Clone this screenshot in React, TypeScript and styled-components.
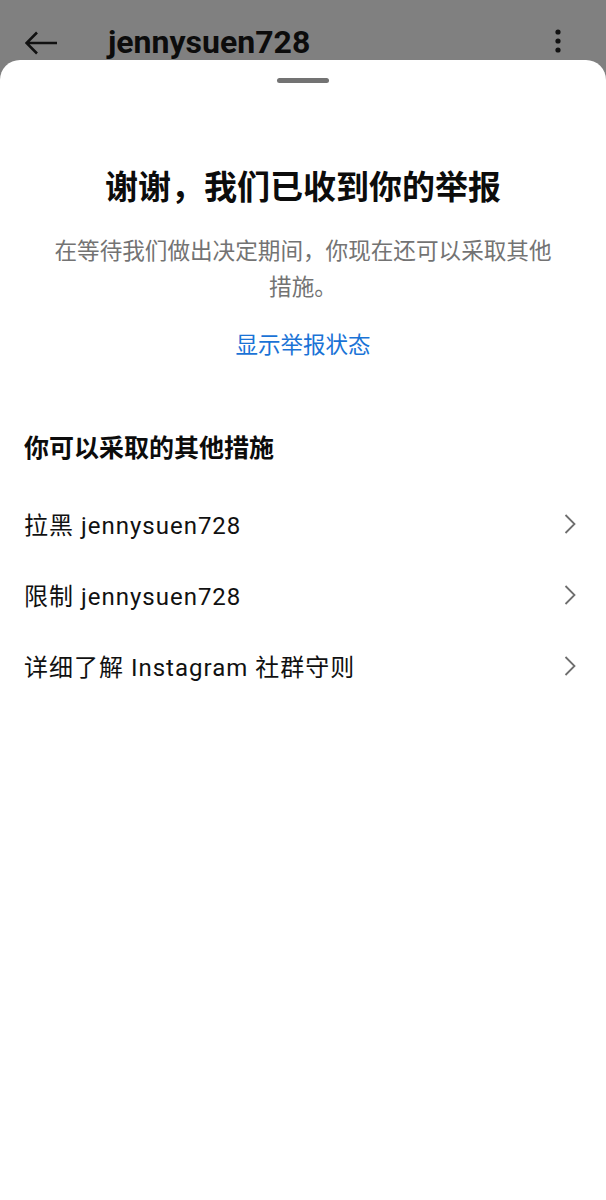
import React from 'react'
import styled, { createGlobalStyle } from 'styled-components'

const GlobalStyle = createGlobalStyle`
    html, body {
        margin: 0;
        padding: 0;
        background: #808080;
    }
    body {
        font-family: Roboto, "Noto Sans CJK SC", sans-serif;
        -webkit-font-smoothing: antialiased;
    }
`

const Screen = styled.div`
    display: flex;
    flex-direction: column;
    width: 606px;
    height: 1200px;
    background: #808080;
    overflow: hidden;
`

const Header = styled.header`
    display: flex;
    align-items: flex-start;
    height: 60px;
    flex-shrink: 0;
    padding: 0 0 0 25px;
    overflow: hidden;
    box-sizing: border-box;
`

const IconButton = styled.div`
    display: flex;
    align-items: center;
    justify-content: center;
    margin-top: ${props => props.$top}px;
`

const HeaderTitle = styled.h1`
    margin: 22px 0 0 50px;
    font-size: 32px;
    line-height: 40px;
    font-weight: 700;
    color: #0c0c0c;
    flex: 1;
`

const Sheet = styled.section`
    flex: 1;
    display: flex;
    flex-direction: column;
    background: #ffffff;
    border-radius: 20px 20px 0 0;
`

const Handle = styled.div`
    width: 52px;
    height: 5px;
    border-radius: 3px;
    background: #737373;
    margin: 18px auto 0;
`

const Intro = styled.div`
    display: flex;
    flex-direction: column;
    align-items: center;
    padding: 0 48px;
    text-align: center;
`

const Title = styled.h2`
    margin: 83px 0 0;
    font-size: 33px;
    line-height: 44px;
    font-weight: 700;
    color: #0c0c0c;
    white-space: nowrap;
`

const Subtitle = styled.p`
    margin: 24px 0 0;
    font-size: 22.6px;
    line-height: 36px;
    color: #737373;
`

const StatusLink = styled.a`
    margin-top: 21px;
    font-size: 22.5px;
    line-height: 36px;
    color: #1a73d6;
    text-decoration: none;
`

const SectionTitle = styled.h3`
    margin: 68px 0 0;
    padding: 0 24px;
    font-size: 25px;
    line-height: 36px;
    font-weight: 700;
    color: #0c0c0c;
`

const List = styled.ul`
    list-style: none;
    margin: 21px 0 0;
    padding: 0;
`

const Row = styled.li`
    display: flex;
    align-items: center;
    justify-content: space-between;
    height: 71px;
    padding: 0 30px 0 24px;
    font-size: 24px;
    letter-spacing: 1px;
    color: #111111;
`

const BackArrow = () => (
    <svg width="33" height="24" viewBox="0 0 33 24" fill="none">
        <path d="M1.5 12H32M12 1.5L1.5 12L12 22.5" stroke="#111" strokeWidth="2.6" strokeLinejoin="miter" />
    </svg>
)

const MoreDots = () => (
    <svg width="8" height="26" viewBox="0 0 8 26">
        <circle cx="4" cy="4" r="2.6" fill="#111" />
        <circle cx="4" cy="13" r="2.6" fill="#111" />
        <circle cx="4" cy="22" r="2.6" fill="#111" />
    </svg>
)

const Chevron = () => (
    <svg width="12" height="20" viewBox="0 0 12 20" fill="none">
        <path d="M1.5 1L10.5 10L1.5 19" stroke="#6e6e6e" strokeWidth="1.8" />
    </svg>
)

const actions = [
    { id: 'block', label: '拉黑 jennysuen728' },
    { id: 'restrict', label: '限制 jennysuen728' },
    { id: 'guidelines', label: '详细了解 Instagram 社群守则' },
]

const App = () => (
    <>
        <GlobalStyle />
        <Screen>
            <Header>
                <IconButton $top={31}>
                    <BackArrow />
                </IconButton>
                <HeaderTitle>jennysuen728</HeaderTitle>
                <IconButton $top={28} style={{ marginRight: 44 }}>
                    <MoreDots />
                </IconButton>
            </Header>
            <Sheet>
                <Handle />
                <Intro>
                    <Title>谢谢，我们已收到你的举报</Title>
                    <Subtitle>在等待我们做出决定期间，你现在还可以采取其他措施。</Subtitle>
                    <StatusLink href="#">显示举报状态</StatusLink>
                </Intro>
                <SectionTitle>你可以采取的其他措施</SectionTitle>
                <List>
                    {actions.map(({ id, label }) => (
                        <Row key={id}>
                            <span>{label}</span>
                            <Chevron />
                        </Row>
                    ))}
                </List>
            </Sheet>
        </Screen>
    </>
)

export default App
